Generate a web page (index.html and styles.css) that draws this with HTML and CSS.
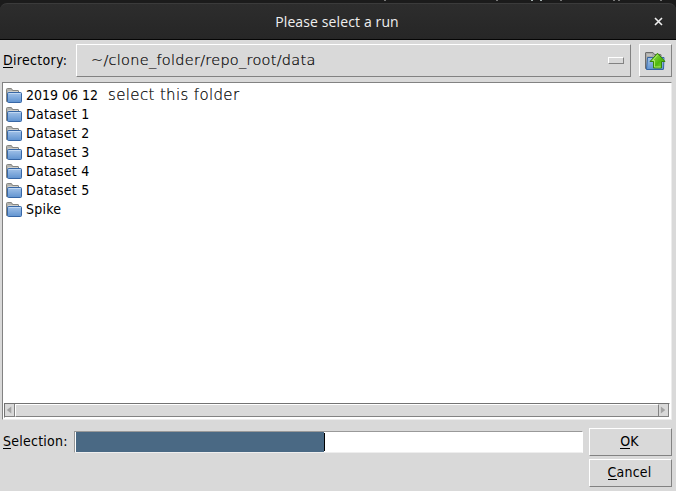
FILE: index.html
```html
<!DOCTYPE html>
<html lang="en">
<head>
<meta charset="utf-8">
<title>Please select a run</title>
<link rel="stylesheet" href="styles.css">
</head>
<body>
<svg class="defs" aria-hidden="true">
  <defs>
    <linearGradient id="blue" x1="0" y1="0" x2="0" y2="1"><stop offset="0" stop-color="#a3c3e9"/><stop offset="1" stop-color="#6093d0"/></linearGradient>
    <linearGradient id="green" x1="0" y1="0" x2="1" y2="1"><stop offset="0" stop-color="#a5e35e"/><stop offset=".6" stop-color="#4fb90c"/><stop offset="1" stop-color="#8cdc3c"/></linearGradient>
    <symbol id="folder" viewBox="0 0 16 16">
      <path d="M.5 13.500V1.500q0-1 1-1H5q.7 0 1 .7l.4 1.300H12q.5 0 .5.500v10.500z" fill="#b3b3af" stroke="#858581"/>
      <path d="M2 3.500h10" stroke="#d0d0cc"/>
      <path d="M1.500 5.500q0-1 1-1h12q1 0 1 1v8q0 1-1 1h-12q-1 0-1-1z" fill="url(#blue)" stroke="#3767a6"/>
      <path d="M3 5.500h11.500" stroke="#c1d8f2"/>
    </symbol>
  </defs>
</svg>
<div class="window">
  <div class="backdrop"><i class="bit b1"></i><i class="bit b2"></i><i class="bit b3"></i><i class="bit b4"></i><i class="bit b5"></i><i class="bit b6"></i></div>
  <header class="titlebar">
    <span class="title">Please select a run</span>
    <svg class="close" viewBox="0 0 9 9"><path d="M1 1l7 7M8 1L1 8" stroke="#f0f0f0" stroke-width="1.600"/></svg>
  </header>
  <div class="directory">
    <label class="label"><u>D</u>irectory:</label>
    <div class="path raised"><span class="note path-text">~/clone_folder/repo_root/data</span><span class="indicator"></span></div>
    <button class="up raised" aria-label="Up">
      <svg width="22" height="20" viewBox="0 0 22 20">
        <path d="M1.500 17.500V2q0-.5.500-.5h7l1.500 2h6q.5 0 .5.500v13.500z" fill="#aaaaa7" stroke="#6b6b6b"/>
        <path d="M3 4h5" stroke="#d0d0cc"/>
        <path d="M3.500 6.500h16.500l-.5 11.500q0 .500-.5.500H2.500z" fill="url(#blue)" stroke="#3465a4"/>
        <path d="M13.500 2.200l7.500 8.300h-3.500v6.500h-8v-6.500H6z" fill="url(#green)" stroke="#35850a" stroke-linejoin="round"/>
        <path d="M13.500 4l-5 5.500h2v6.500h6" stroke="#baf47a" fill="none" stroke-width=".8"/>
      </svg>
    </button>
  </div>
  <div class="list">
    <ul class="items">
      <li><svg class="icon"><use href="#folder"/></svg><span class="date">2019 06 12</span><span class="note hint">select this folder</span></li>
      <li><svg class="icon"><use href="#folder"/></svg><span>Dataset 1</span></li>
      <li><svg class="icon"><use href="#folder"/></svg><span>Dataset 2</span></li>
      <li><svg class="icon"><use href="#folder"/></svg><span>Dataset 3</span></li>
      <li><svg class="icon"><use href="#folder"/></svg><span>Dataset 4</span></li>
      <li><svg class="icon"><use href="#folder"/></svg><span>Dataset 5</span></li>
      <li><svg class="icon"><use href="#folder"/></svg><span>Spike</span></li>
    </ul>
    <div class="scrollbar">
      <span class="arrow"><svg viewBox="0 0 10 12"><path d="M7 2v8L2 6z"/></svg></span>
      <span class="thumb"></span>
      <span class="arrow"><svg viewBox="0 0 10 12"><path d="M2 2v8l5-4z"/></svg></span>
    </div>
  </div>
  <div class="footer">
    <label class="label"><u>S</u>election:</label>
    <div class="entry"><span class="selected"></span><span class="caret"></span></div>
    <div class="actions">
      <button class="action raised"><span><u>O</u>K</span></button>
      <button class="action raised"><span><u>C</u>ancel</span></button>
    </div>
  </div>
</div>
</body>
</html>
```
FILE: styles.css
```css
* { box-sizing: border-box; }
body { margin: 0; background: #fff; overflow: hidden; }
.defs { position: absolute; width: 0; height: 0; }
.window {
  width: 676px; height: 491px; color: #000;
  background: linear-gradient(#1b1b1b 12px, #d9d9d9 12px);
  font: 14px/19px "DejaVu Sans Condensed", "DejaVu Sans", sans-serif;
  font-stretch: condensed;
}
.backdrop { height: 3px; background: #1b1b1b; position: relative; }
.bit { position: absolute; top: 0; width: 2px; height: 1px; background: #777; }
.b1 { left: 384px; } .b2 { left: 496px; } .b3 { left: 531px; width: 11px; background: repeating-linear-gradient(90deg, #a5b0b0 0 2px, #1b1b1b 2px 9px); }
.b4 { left: 560px; } .b5 { left: 613px; width: 7px; background: repeating-linear-gradient(90deg, #777 0 2px, #1b1b1b 2px 5px); } .b6 { left: 660px; }
.titlebar {
  position: relative; height: 37px; display: flex; align-items: center; justify-content: center;
  background: linear-gradient(#2d2d2d, #262626); border-top: 1px solid #3b3b3b; border-bottom: 1px solid #050505;
  border-radius: 7px 7px 0 0; padding-right: 2px;
}
.title { font: 14px/20px "Open Sans", "Noto Sans", sans-serif; letter-spacing: 0.12px; color: #efefef; }
.close { position: absolute; right: 13px; top: 13px; width: 9px; height: 9px; }
.raised { border: 1px solid; border-color: #fff #828282 #828282 #fff; background: #d9d9d9; }
.label { padding-left: 3px; white-space: nowrap; letter-spacing: 0.3px; }
u { text-decoration: none; border-bottom: 1px solid #000; display: inline-block; line-height: 14px; }
.directory { display: grid; grid-template-columns: 76px 555px 41px; padding-top: 4px; height: 42px; }
.directory .label { padding-top: 7px; }
.footer .label { letter-spacing: 0.25px; }
.path { height: 33px; display: flex; align-items: center; justify-content: space-between; padding: 0 6px 0 14px; }
.note {
  font-family: "DejaVu Sans", sans-serif; font-stretch: normal; font-weight: 200;
  color: #000; -webkit-text-stroke: 0.2px #000; white-space: nowrap;
}
.path-text { font-size: 14.500px; letter-spacing: 0.27px; }
.indicator { width: 16px; height: 7px; border: 1px solid; border-color: #fff #828282 #828282 #fff; }
.up { margin-left: 8px; width: 33px; height: 33px; padding: 0 2px 0 0; display: flex; align-items: center; justify-content: center; }
.up svg { flex: none; }
.list {
  margin-left: 2px; width: 670px; height: 338px; background: #fff; display: flex; flex-direction: column; justify-content: space-between;
  border: 1px solid; border-color: #828282 #ececec #ececec #828282;
}
.items { list-style: none; margin: 0; padding: 3px 0 0 3px; letter-spacing: 0.24px; }
.items li { height: 19px; display: flex; align-items: center; gap: 4px; white-space: nowrap; }
.icon { width: 16px; height: 16px; }
.date { letter-spacing: 0; }
.hint { font-size: 15px; margin-left: 6px; letter-spacing: 0.35px; }
.scrollbar {
  margin: 0 1px 1px; height: 15px; display: flex; background: #d9d9d9;
  border: 1px solid; border-color: #737373 #fff #fff #737373;
}
.arrow { width: 10px; border-right: 1px solid #828282; border-bottom: 1px solid #828282; display: flex; }
.arrow svg { width: 10px; height: 12px; fill: #a3a3a3; }
.thumb { flex: 1; border: 1px solid; border-color: #fff #828282 #828282 #fff; }
.footer { display: grid; grid-template-columns: 74px 509px 89px; padding-top: 8px; }
.footer .label { padding-top: 4px; }
.entry { height: 22px; margin-top: 3px; background: #fff; border: 1px solid; border-color: #999 #fff #eee #999; display: flex; }
.selected { margin-left: 1px; width: 248px; background: #4a6984; }
.caret { width: 1px; background: #000; height: 18px; margin-top: 1px; }
.actions { margin-left: 6px; display: grid; gap: 3px; width: 83px; }
.action { height: 28px; padding: 0 2px 2px 0; font: inherit; color: #000; text-align: center; letter-spacing: 0.2px; }
```
